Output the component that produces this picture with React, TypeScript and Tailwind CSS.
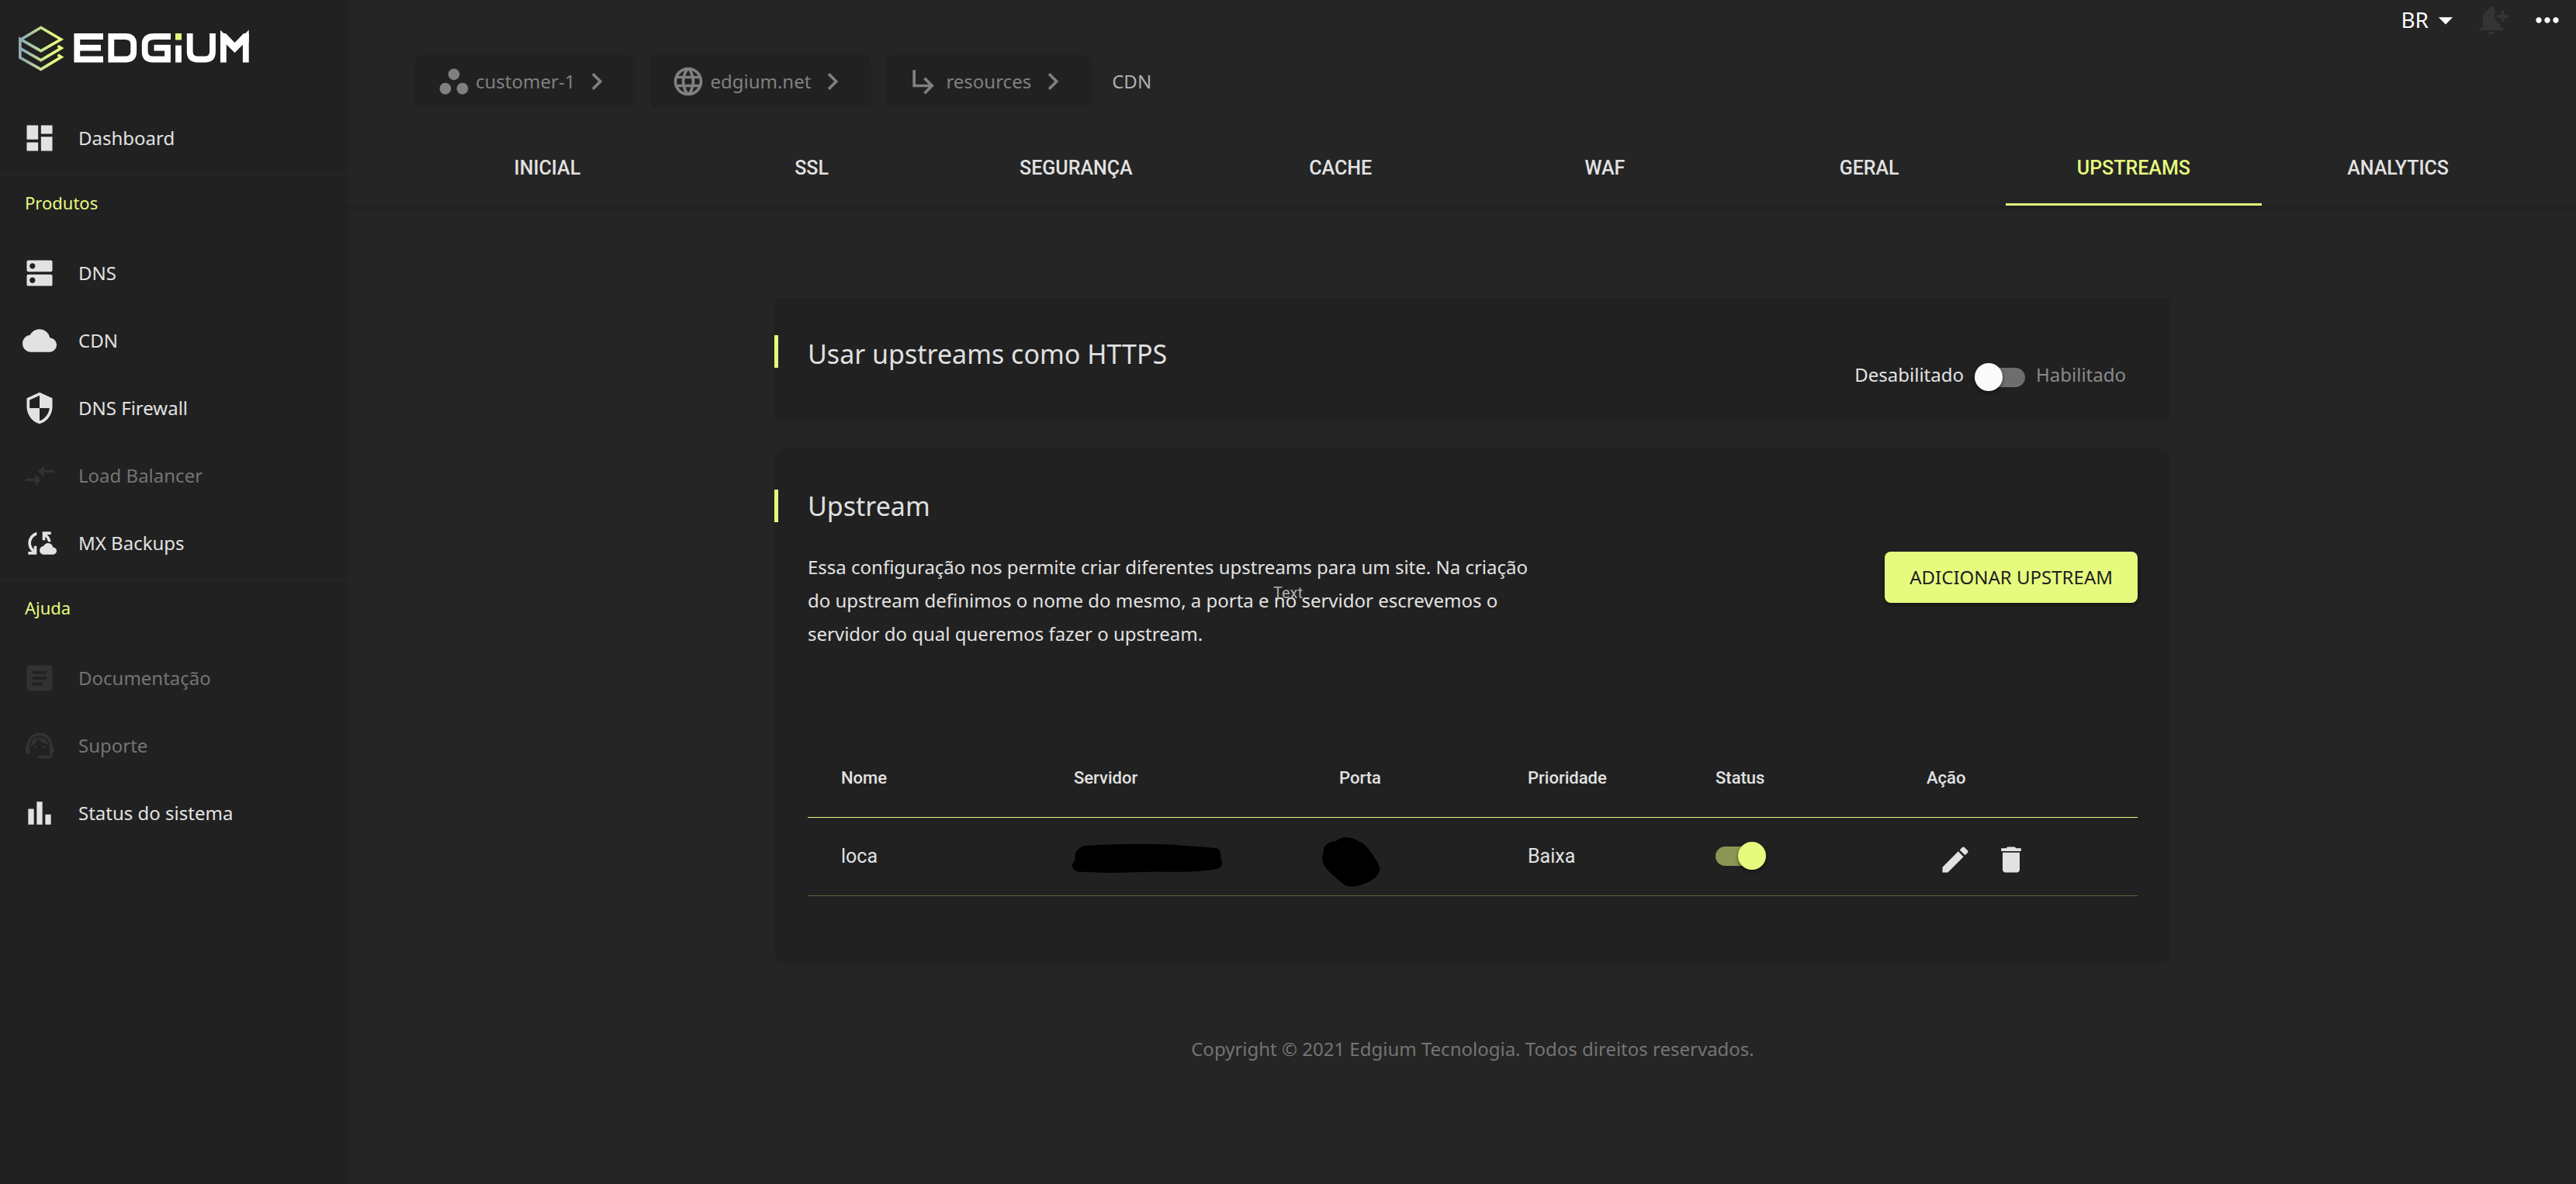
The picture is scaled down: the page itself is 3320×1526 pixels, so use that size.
import { useState } from "react";
import type { IconType } from "react-icons";
import {
  MdArrowDropDown,
  MdArticle,
  MdBarChart,
  MdChevronRight,
  MdCloud,
  MdCloudSync,
  MdCompareArrows,
  MdDashboard,
  MdDelete,
  MdDns,
  MdEdit,
  MdLanguage,
  MdMoreHoriz,
  MdSecurity,
  MdSubdirectoryArrowRight,
  MdSupportAgent,
  MdWorkspaces,
} from "react-icons/md";

function Logo() {
  return (
    <svg viewBox="0 0 300 60" className="h-[60px] w-[300px]" role="img" aria-label="Edgium">
      <defs>
        <linearGradient id="mark" gradientUnits="userSpaceOnUse" x1="0" y1="0" x2="58" y2="0">
          <stop offset="0.1" stopColor="#8fb1b4" />
          <stop offset="0.75" stopColor="#e6fb7e" />
        </linearGradient>
      </defs>
      <g fill="none" stroke="url(#mark)" strokeWidth="3.6">
        <path d="M1.9 19.5 28.7 3.5 54.6 18.8 28.7 33.6 1.9 18.4V42.2L28.7 57.3 55 41.5 50.5 38.8" />
        <path d="M1.9 30.2 28.7 45.6 55 30 50.5 27.3" />
      </g>
      <g fill="none" stroke="#fff" strokeWidth="7.8">
        <path d="M109 15H75.300V44.500H109M75 29.700H106" />
        <path d="M119.300 15H137.500Q148.200 15 148.200 25V34.500Q148.200 44.500 137.500 44.500H119.300Z" />
        <path d="M196 15H175Q162.700 15 162.700 25V34.500Q162.700 44.500 173 44.500H192V29.700H174.500" />
        <path d="M206 26.500V48.500" />
        <path d="M220.700 11V34.500Q220.700 44.500 231 44.500H240Q250 44.500 250 34.500V11" />
        <path d="M263.900 48.500V16L278.500 30.500 292.800 16V48.500" />
      </g>
      <path d="M260 11h7l11.500 12 11.500-12h6.700v11h-6l-12.200 13-12.300-13H260z" fill="#fff" />
      <path d="M202 11h8v8.500h-8z" fill="#e6fb7e" />
    </svg>
  );
}

type Item = { icon: IconType; label: string; disabled?: boolean };

const products: Item[] = [
  { icon: MdDns, label: "DNS" },
  { icon: MdCloud, label: "CDN" },
  { icon: MdSecurity, label: "DNS Firewall" },
  { icon: MdCompareArrows, label: "Load Balancer", disabled: true },
  { icon: MdCloudSync, label: "MX Backups" },
];

const help: Item[] = [
  { icon: MdArticle, label: "Documentação", disabled: true },
  { icon: MdSupportAgent, label: "Suporte", disabled: true },
  { icon: MdBarChart, label: "Status do sistema" },
];

function NavLink({ icon: Icon, label, disabled }: Item) {
  return (
    <a
      href="#"
      aria-disabled={disabled}
      className={`flex h-[87px] items-center gap-7 pl-[29px] text-2xl ${disabled ? "text-[#747474]" : "text-[#e2e2e2]"}`}
    >
      <Icon className={`size-11 shrink-0 ${disabled ? "text-[#323232]" : ""}`} />
      {label}
    </a>
  );
}

function NavGroup({ title, items }: { title: string; items: Item[] }) {
  return (
    <section className="border-t-2 border-[#252525] pb-1">
      <h2 className="px-8 pt-[13px] pb-[26px] text-[22px] leading-[42px] text-[#e6fb7e]">{title}</h2>
      {items.map((item) => (
        <NavLink key={item.label} {...item} />
      ))}
    </section>
  );
}

function Crumb({ icon: Icon, label }: { icon: IconType; label: string }) {
  return (
    <a href="#" className="flex h-[67px] items-center gap-1.5 rounded-lg bg-[#212121] px-7 text-[#808080]">
      <Icon className="size-11" />
      <span>{label}</span>
      <MdChevronRight className="size-11" />
    </a>
  );
}

const tabs = ["INICIAL", "SSL", "SEGURANÇA", "CACHE", "WAF", "GERAL", "UPSTREAMS", "ANALYTICS"];

function Toggle({ label, defaultChecked }: { label: string; defaultChecked?: boolean }) {
  return (
    <input
      type="checkbox"
      role="switch"
      aria-label={label}
      defaultChecked={defaultChecked}
      className="relative block h-[25px] w-[65px] appearance-none rounded-full bg-[#6e6e6e] before:absolute before:left-0 before:-top-[6px] before:size-9 before:rounded-full before:bg-[#fafafa] before:shadow-[0_2px_4px_rgba(0,0,0,0.5)] checked:bg-[#8b9653] checked:before:left-[29px] checked:before:bg-[#e6fb7e]"
    />
  );
}

function CardTitle({ children, compact }: { children: string; compact?: boolean }) {
  return (
    <div className="flex">
      <span className="h-[42px] w-[5px] bg-[#e6fb7e]" />
      <h2 className={`ml-[38px] text-[34px] text-[#e0e0e0] ${compact ? "leading-[42px]" : "leading-[48px]"}`}>
        {children}
      </h2>
    </div>
  );
}

export default function App() {
  const [active, setActive] = useState("UPSTREAMS");
  return (
    <div className="flex min-h-screen bg-[#252525] font-['Noto_Sans',sans-serif] text-2xl text-[#e2e2e2]">
      <aside className="w-[449px] shrink-0 bg-[#212121]">
        <div className="pl-6 pt-8">
          <Logo />
        </div>
        <nav className="pt-[42px]">
          <div className="pb-1">
            <NavLink icon={MdDashboard} label="Dashboard" />
          </div>
          <NavGroup title="Produtos" items={products} />
          <NavGroup title="Ajuda" items={help} />
        </nav>
      </aside>

      <div className="flex min-w-0 flex-1 flex-col">
        <header className="flex h-[52px] items-center justify-end pr-[15px] text-white">
          <button type="button" className="flex items-center text-[28px]">
            BR
            <MdArrowDropDown className="size-11" />
          </button>
          <button type="button" aria-label="Notificações" className="ml-[22px]">
            <svg viewBox="0 0 37 37" className="size-[37px] text-[#343434]" fill="currentColor">
              <path d="M15 .5a4 4 0 0 1 4 4.200l2 1.300Q17.500 10 19.500 15T26.500 23V27L30 28V31H0V28L4 27V16Q4 7 11 4.700A4 4 0 0 1 15 .5Z" />
              <path d="M11 33h8a4 3.500 0 0 1-8 0z" />
              <path d="M27.500 6h4v5H37v4h-5.500v5h-4v-5H22v-4h5.500z" />
            </svg>
          </button>
          <button type="button" aria-label="Mais opções" className="ml-7">
            <MdMoreHoriz className="size-11" />
          </button>
        </header>

        <nav aria-label="Breadcrumb" className="flex items-center gap-[18px] pl-[86px] pt-[19px]">
          <Crumb icon={MdWorkspaces} label="customer-1" />
          <Crumb icon={MdLanguage} label="edgium.net" />
          <Crumb icon={MdSubdirectoryArrowRight} label="resources" />
          <span className="ml-2 text-[#b0b0b0]">CDN</span>
        </nav>

        <div
          role="tablist"
          className="mt-[30px] grid grid-cols-8 border-b-[5px] border-[#212121] pl-[86px] pr-[59px]"
        >
          {tabs.map((tab) => (
            <button
              key={tab}
              type="button"
              role="tab"
              aria-selected={tab === active}
              onClick={() => setActive(tab)}
              className={`mx-[5px] h-[97px] border-b-[3px] pt-1 font-['Roboto',sans-serif] text-[25px] font-medium ${
                tab === active ? "border-[#e6fb7e] text-[#e6fb7e]" : "border-transparent"
              }`}
            >
              {tab}
            </button>
          ))}
        </div>

        <main className="flex flex-1 flex-col items-center pl-[86px] pr-[59px] pt-[114px]">
          <div className="flex w-full max-w-[1800px] flex-col gap-9">
            <section className="flex items-start justify-between rounded-lg bg-[#212121] pb-[34px] pt-12">
              <CardTitle>Usar upstreams como HTTPS</CardTitle>
              <div className="flex items-center gap-[14px] pr-[58px] pt-8 leading-[38px]">
                <span className="pb-1.5">Desabilitado</span>
                <Toggle label="Usar upstreams como HTTPS" />
                <span className="pb-1.5 text-[#8a8a8a]">Habilitado</span>
              </div>
            </section>

            <section className="rounded-2xl bg-[#212121] pb-[87px] pt-[53px]">
              <CardTitle compact>Upstream</CardTitle>
              <div className="flex items-start justify-between px-[43px] pt-9">
                <div className="relative">
                  <p className="w-[940px] leading-[43px]">
                    Essa configuração nos permite criar diferentes upstreams para um site. Na criação do upstream
                    definimos o nome do mesmo, a porta e no servidor escrevemos o servidor do qual queremos fazer o
                    upstream.
                  </p>
                  <span className="absolute left-[600px] top-[43px] font-['Roboto',sans-serif] text-xl leading-6 text-[#b0b0b0]">
                    Text
                  </span>
                </div>
                <button
                  type="button"
                  className="mt-0.5 h-[66px] rounded-lg bg-[#e6fb7e] px-8 text-[#212121] shadow-[0_3px_6px_rgba(0,0,0,0.4)]"
                >
                  ADICIONAR UPSTREAM
                </button>
              </div>
              <div className="px-[43px] pt-[114px]">
                <table className="w-full table-fixed text-left font-['Roboto',sans-serif]">
                  <colgroup>
                    <col className="w-[300px]" />
                    <col className="w-[342px]" />
                    <col className="w-[243px]" />
                    <col className="w-[242px]" />
                    <col className="w-[272px]" />
                    <col />
                  </colgroup>
                  <thead>
                    <tr className="h-[101px] border-b border-[#e6fb7e] text-[22px]">
                      {["Nome", "Servidor", "Porta", "Prioridade", "Status", "Ação"].map((name) => (
                        <th key={name} scope="col" className="px-[43px] font-medium">
                          {name}
                        </th>
                      ))}
                    </tr>
                  </thead>
                  <tbody>
                    <tr className="h-[101px] border-b border-[#5c6239] text-[25px]">
                      <td className="px-[43px]">loca</td>
                      <td className="pl-10 pt-1">
                        <svg viewBox="0 0 196 38" className="h-[38px] w-[196px]" role="img" aria-label="Servidor oculto">
                          <path d="M16 3Q80-1 135 2L186 6Q193 7 192 18 198 29 188 33 160 38 110 36.500L50 38 8 36.500Q0 34 1 27L5 21Q1 10 16 3z" />
                        </svg>
                      </td>
                      <td className="pl-5 pt-[14px]">
                        <svg viewBox="0 0 76 64" className="h-16 w-[76px]" role="img" aria-label="Porta oculta">
                          <path d="M19 5C25-1 36-1 46 4 57 9 62 16 67 24 73 33 76 38 75 43 73 53 60 59 48 62.500 38 65 31 63 27 59.500 12 46 2 40 1 28 1 23 3 21 3 16 4 9 11 5 19 5z" />
                        </svg>
                      </td>
                      <td className="px-[43px]">Baixa</td>
                      <td className="px-[43px]">
                        <Toggle label="Status de loca" defaultChecked />
                      </td>
                      <td className="pl-[58px] pt-2">
                        <div className="flex gap-7">
                          <button type="button" aria-label="Editar">
                            <MdEdit className="size-11" />
                          </button>
                          <button type="button" aria-label="Excluir">
                            <MdDelete className="size-11" />
                          </button>
                        </div>
                      </td>
                    </tr>
                  </tbody>
                </table>
              </div>
            </section>
          </div>
          <footer className="pb-20 pt-[94px] text-[#747474]">
            Copyright © 2021 Edgium Tecnologia. Todos direitos reservados.
          </footer>
        </main>
      </div>
    </div>
  );
}
